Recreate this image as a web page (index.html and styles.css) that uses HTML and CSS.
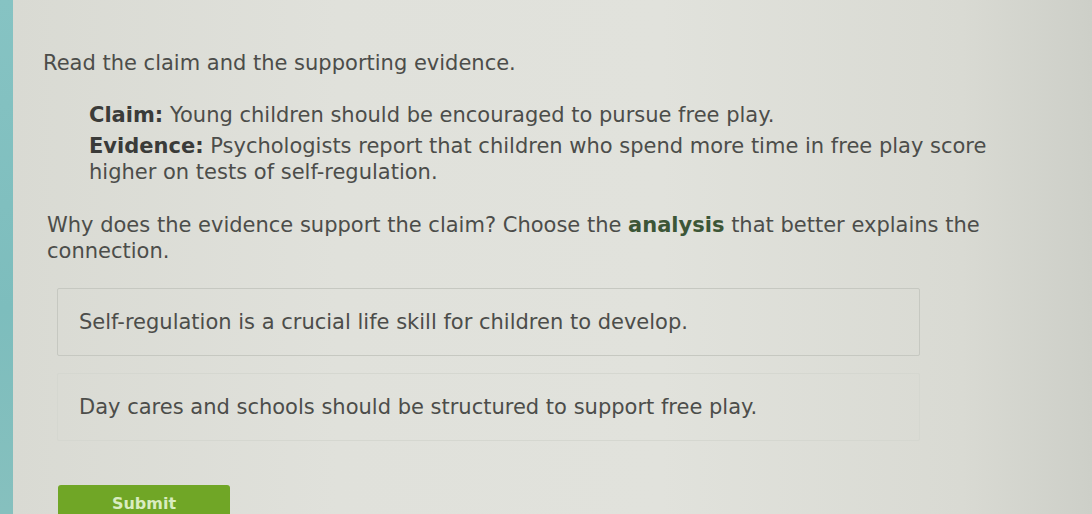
FILE: index.html
```
<!DOCTYPE html>
<html>
<head>
<meta charset="utf-8">
<link rel="stylesheet" href="styles.css">
</head>
<body>
<div class="page">
  <div class="strip"></div>
  <main class="main">
    <p class="intro">Read the claim and the supporting evidence.</p>
    <div class="evidence-block">
      <p class="claim"><b>Claim:</b> Young children should be encouraged to pursue free play.</p>
      <p class="evidence"><span><b>Evidence:</b> Psychologists report that children who spend more time in free play score</span><br><span>higher on tests of self-regulation.</span></p>
    </div>
    <p class="question"><span>Why does the evidence support the claim? Choose the <b class="key">analysis</b> that better explains the</span><br><span>connection.</span></p>
    <div class="options">
      <div class="option opt-a">Self-regulation is a crucial life skill for children to develop.</div>
      <div class="option opt-b">Day cares and schools should be structured to support free play.</div>
    </div>
    <button class="submit">Submit</button>
  </main>
</div>
</body>
</html>
```
FILE: styles.css
```
html, body {
  margin: 0;
  padding: 0;
  height: 100%;
  overflow: hidden;
}
body {
  font-family: "DejaVu Sans", Verdana, sans-serif;
  color: #4c4d4a;
}
.page {
  display: flex;
  height: 514px;
}
.strip {
  width: 13px;
  flex: none;
  background: linear-gradient(180deg, #86c3c3 0%, #7dbdbd 60%, #86c0be 100%);
}
.main {
  flex: 1;
  background: linear-gradient(90deg, #d9dad3 0%, #e0e1db 30%, #e1e2dc 60%, #d9dad3 88%, #cdcfc8 100%);
  padding: 50px 0 0 30px;
  font-size: 21px;
  line-height: 26px;
}
p { margin: 0; }
.intro {
  margin-bottom: 26px;
}
.evidence-block {
  padding-left: 46px;
  width: 930px;
}
.claim { margin-bottom: 5px; }
.evidence-block b { color: #3a3b39; }
.question {
  margin-top: 27px;
  padding-left: 4px;
  width: 960px;
}
.key { color: #3c5637; }
.options {
  margin: 24px 0 0 14px;
  width: 863px;
  display: flex;
  flex-direction: column;
  gap: 17px;
}
.option {
  height: 68px;
  box-sizing: border-box;
  padding-left: 21px;
  display: flex;
  align-items: center;
  border: 1px solid #cdcfc8;
  border-radius: 2px;
}
.opt-a { border-color: #c6c8c1; }
.opt-b { border-color: #d5d7d0; }
.submit {
  margin: 44px 0 0 15px;
  width: 172px;
  height: 40px;
  border: none;
  border-radius: 3px;
  background: #70a626;
  color: #d9ecc0;
  font-family: "DejaVu Sans", Verdana, sans-serif;
  font-weight: bold;
  font-size: 16px;
  line-height: 20px;
  padding: 9px 0 11px 0;
  display: block;
  text-align: center;
}
```
